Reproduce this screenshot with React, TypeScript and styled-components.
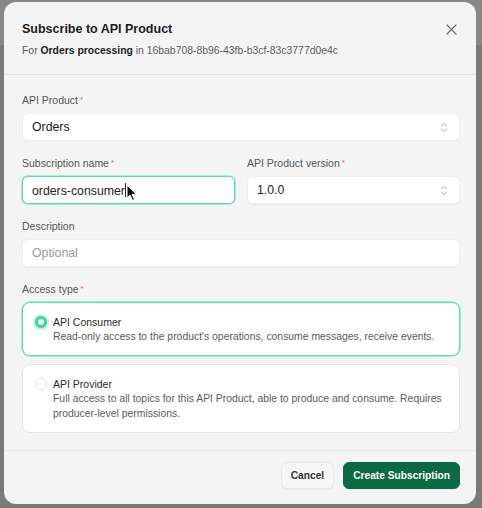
import * as React from 'react';
import styled, { createGlobalStyle } from 'styled-components';

const GlobalStyle = createGlobalStyle`
    html, body {
        margin: 0;
        padding: 0;
        height: 100%;
    }
    body {
        background: linear-gradient(#888888 0, #888888 45px, #7a7a7a 45px);
        font-family: "Liberation Sans", Arial, sans-serif;
        overflow: hidden;
    }
`;

const Backdrop = styled.div`
    padding: 2px 6px 4px 4px;
`;

const Modal = styled.div`
    width: 472px;
    height: 502px;
    background: #f4f4f4;
    border-radius: 12px;
    display: flex;
    flex-direction: column;
    box-sizing: border-box;
    overflow: hidden;
`;

const Header = styled.div`
    position: relative;
    padding: 19px 16px 16px 18px;
    border-bottom: 1px solid #e4e4e4;
`;

const Title = styled.h2`
    margin: 0;
    font-size: 12.5px;
    line-height: 17px;
    font-weight: 700;
    color: #1c1c1c;
`;

const Subtitle = styled.p`
    margin: 6px 0 0;
    font-size: 10.4px;
    line-height: 14px;
    color: #5c5c5c;
    b {
        color: #1c1c1c;
        font-weight: 700;
    }
`;

const CloseButton = styled.button`
    position: absolute;
    top: 20px;
    right: 18px;
    width: 14px;
    height: 14px;
    padding: 0;
    border: 0;
    background: none;
    display: flex;
    align-items: center;
    justify-content: center;
`;

const Body = styled.div`
    flex: 1;
    padding: 18px 16px 17px 18px;
    display: flex;
    flex-direction: column;
    gap: 15px;
`;

const Row = styled.div`
    display: grid;
    grid-template-columns: 1fr 1fr;
    gap: 12px;
`;

const Field = styled.div`
    display: flex;
    flex-direction: column;
    gap: 6px;
`;

const Label = styled.label`
    font-size: 10.5px;
    line-height: 14px;
    color: #555;
    span {
        color: #e2574c;
        font-size: 8px;
        vertical-align: top;
        margin-left: 2px;
    }
`;

const Box = styled.div<{ $focused?: boolean }>`
    position: relative;
    height: 28px;
    box-sizing: border-box;
    background: #fff;
    border-radius: 6px;
    border: 1px solid ${p => (p.$focused ? '#5ed9ab' : '#efefef')};
    box-shadow: ${p => (p.$focused ? '0 0 0 1px #a8ecd2' : '0 1px 1px rgba(0,0,0,0.03)')};
    display: flex;
    align-items: center;
    padding: 0 11px 0 9px;
    font-size: 12.3px;
    color: #222;
`;

const Value = styled.div<{ $placeholder?: boolean }>`
    flex: 1;
    color: ${p => (p.$placeholder ? '#9a9a9a' : '#222')};
`;

const Caret = styled.span`
    display: inline-block;
    width: 1px;
    height: 14px;
    background: #222;
    vertical-align: -2px;
`;

const Pointer = styled.svg`
    position: absolute;
    left: 103px;
    top: 7px;
`;

const Cards = styled.div`
    display: flex;
    flex-direction: column;
    gap: 8px;
`;

const Card = styled.div<{ $selected?: boolean }>`
    background: #fff;
    border-radius: 8px;
    border: 1px solid ${p => (p.$selected ? '#62dcaf' : '#e6e6e6')};
    box-shadow: ${p => (p.$selected ? '0 0 0 1px #a5ebd0' : 'none')};
    display: flex;
    gap: 6px;
    padding: 12px 14px 11px 12px;
`;

const Radio = styled.span<{ $checked?: boolean }>`
    flex: none;
    margin-top: 1px;
    width: 12px;
    height: 12px;
    box-sizing: border-box;
    border-radius: 50%;
    background: ${p => (p.$checked ? '#e9fbf4' : '#fff')};
    border: ${p => (p.$checked ? '3px solid #3fd49c' : '1px solid #e2e2e2')};
    box-shadow: ${p => (p.$checked ? '0 0 0 2px #c7f2e1' : 'none')};
`;

const CardText = styled.div`
    display: flex;
    flex-direction: column;
`;

const CardTitle = styled.div`
    font-size: 10.5px;
    line-height: 14px;
    color: #2a2a2a;
`;

const CardDesc = styled.div`
    font-size: 10.4px;
    line-height: 15px;
    color: #5a5a5a;
`;

const Footer = styled.div`
    border-top: 1px solid #e8e8e8;
    padding: 11px 16px 16px;
    display: flex;
    justify-content: flex-end;
    gap: 9px;
`;

const Button = styled.button<{ $primary?: boolean }>`
    height: 27px;
    padding: 0 9px;
    border-radius: 6px;
    font-family: inherit;
    font-size: 10.2px;
    font-weight: 700;
    border: 1px solid ${p => (p.$primary ? '#0b6a45' : '#e8e8e8')};
    background: ${p => (p.$primary ? '#0b6a45' : '#f6f6f6')};
    color: ${p => (p.$primary ? '#fff' : '#333')};
    box-shadow: 0 1px 1px rgba(0, 0, 0, 0.04);
`;

const UpDown = () => (
    <svg width="8" height="11" viewBox="0 0 8 11" fill="none" stroke="#a6a6a6" strokeWidth="1" strokeLinecap="round" strokeLinejoin="round">
        <path d="M1.5 4 4 1.5 6.5 4" />
        <path d="M1.5 7 4 9.5 6.5 7" />
    </svg>
);

const Required = () => <span>*</span>;

const App: React.FC = () => (
    <>
        <GlobalStyle />
        <Backdrop>
            <Modal>
                <Header>
                    <Title>Subscribe to API Product</Title>
                    <Subtitle>
                        For <b>Orders processing</b> in 16bab708-8b96-43fb-b3cf-83c3777d0e4c
                    </Subtitle>
                    <CloseButton aria-label="Close">
                        <svg width="11" height="11" viewBox="0 0 11 11" stroke="#6f6f6f" strokeWidth="1.2" strokeLinecap="round">
                            <path d="M1 1 10 10M10 1 1 10" />
                        </svg>
                    </CloseButton>
                </Header>
                <Body>
                    <Field>
                        <Label>API Product<Required /></Label>
                        <Box>
                            <Value>Orders</Value>
                            <UpDown />
                        </Box>
                    </Field>
                    <Row>
                        <Field>
                            <Label>Subscription name<Required /></Label>
                            <Box $focused>
                                <Value>orders-consumer<Caret /></Value>
                                <Pointer width="12" height="18" viewBox="0 0 12 18">
                                    <path d="M1 1 L1 14 L4 11 L6.5 16.5 L8.5 15.6 L6 10.3 L10.5 10.3 Z" fill="#111" stroke="#fff" strokeWidth="1" strokeLinejoin="round" />
                                </Pointer>
                            </Box>
                        </Field>
                        <Field>
                            <Label>API Product version<Required /></Label>
                            <Box>
                                <Value>1.0.0</Value>
                                <UpDown />
                            </Box>
                        </Field>
                    </Row>
                    <Field>
                        <Label>Description</Label>
                        <Box>
                            <Value $placeholder>Optional</Value>
                        </Box>
                    </Field>
                    <Field>
                        <Label>Access type<Required /></Label>
                        <Cards>
                            <Card $selected>
                                <Radio $checked />
                                <CardText>
                                    <CardTitle>API Consumer</CardTitle>
                                    <CardDesc>Read-only access to the product's operations, consume messages, receive events.</CardDesc>
                                </CardText>
                            </Card>
                            <Card>
                                <Radio />
                                <CardText>
                                    <CardTitle>API Provider</CardTitle>
                                    <CardDesc>
                                        Full access to all topics for this API Product, able to produce and consume. Requires producer-level permissions.
                                    </CardDesc>
                                </CardText>
                            </Card>
                        </Cards>
                    </Field>
                </Body>
                <Footer>
                    <Button>Cancel</Button>
                    <Button $primary>Create Subscription</Button>
                </Footer>
            </Modal>
        </Backdrop>
    </>
);

export default App;
